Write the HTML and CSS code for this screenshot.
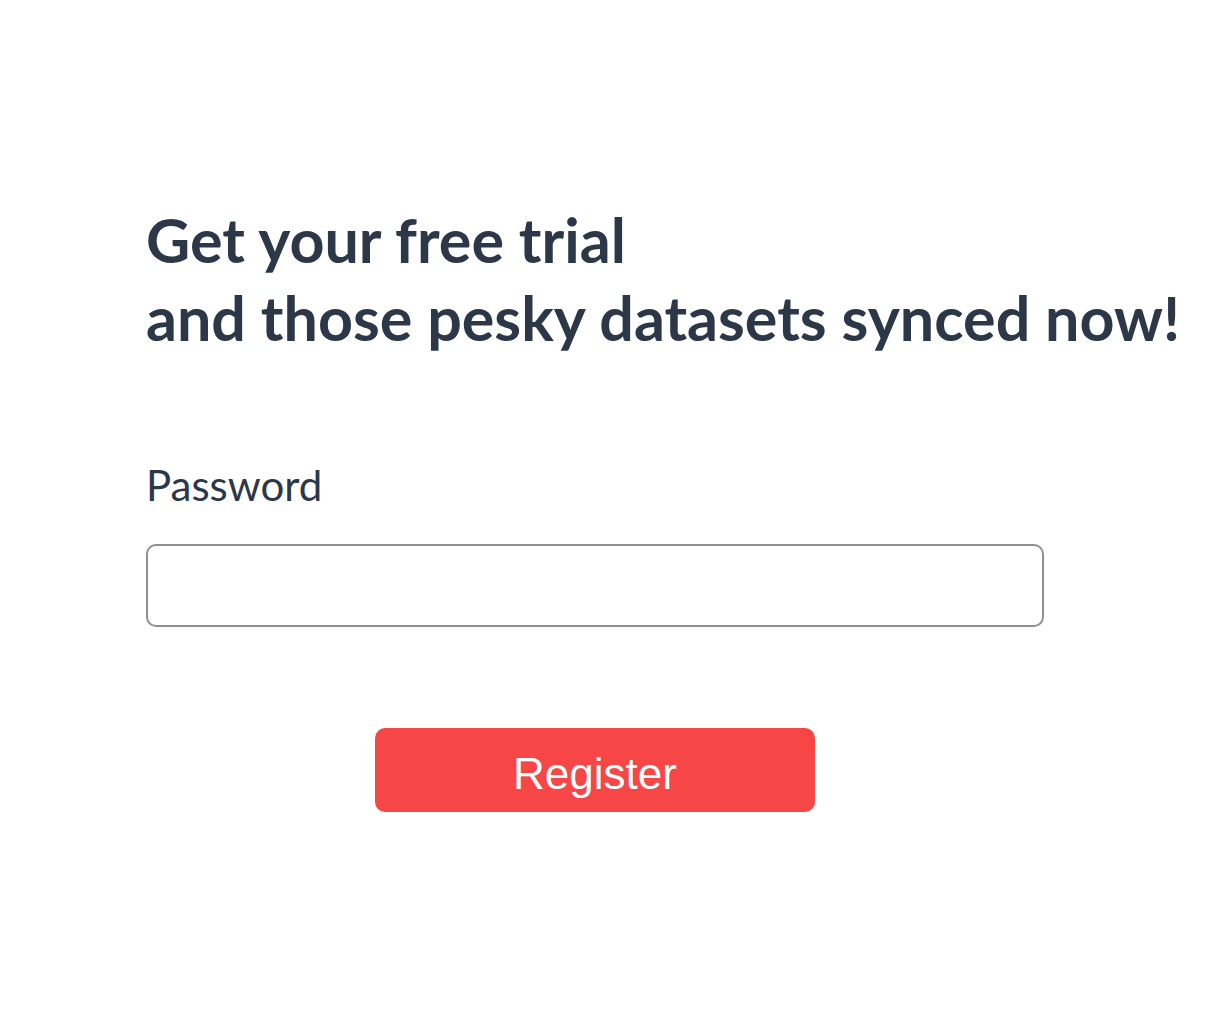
FILE: index.html
```html
<!DOCTYPE html>
<html>
<head>
<meta charset="utf-8">
<link rel="stylesheet" href="styles.css">
</head>
<body>
<main class="page">
  <form class="signup">
    <h1 class="title">Get your free trial<br>and those pesky datasets synced now!</h1>
    <label class="label" for="pw">Password</label>
    <input class="field" id="pw" type="password">
    <div class="actions">
      <button class="btn" type="button">Register</button>
    </div>
  </form>
</main>
</body>
</html>
```
FILE: styles.css
```css
html, body {
  margin: 0;
  background: #fff;
}
.page {
  padding: 201px 0 0 146px;
}
.signup {
  width: 898px;
  display: flex;
  flex-direction: column;
}
.title {
  margin: 0;
  font-family: Lato, "Noto Sans", sans-serif;
  font-weight: 700;
  font-size: 61px;
  line-height: 78px;
  color: #2c3848;
  white-space: nowrap;
}
.label {
  margin-top: 100px;
  font-family: Lato, "Noto Sans", sans-serif;
  font-size: 42px;
  line-height: 56px;
  color: #2c3848;
}
.field {
  margin-top: 31px;
  box-sizing: border-box;
  width: 898px;
  height: 83px;
  border: 2px solid #8f8f8f;
  border-radius: 10px;
  padding: 0 20px;
  font-size: 30px;
}
.actions {
  margin-top: 101px;
  display: flex;
  justify-content: center;
}
.btn {
  width: 440px;
  height: 84px;
  border: none;
  border-radius: 10px;
  padding: 8px 0 0;
  background: #f74646;
  color: #fff;
  font-family: "Liberation Sans", Arial, sans-serif;
  font-size: 44px;
}
```
